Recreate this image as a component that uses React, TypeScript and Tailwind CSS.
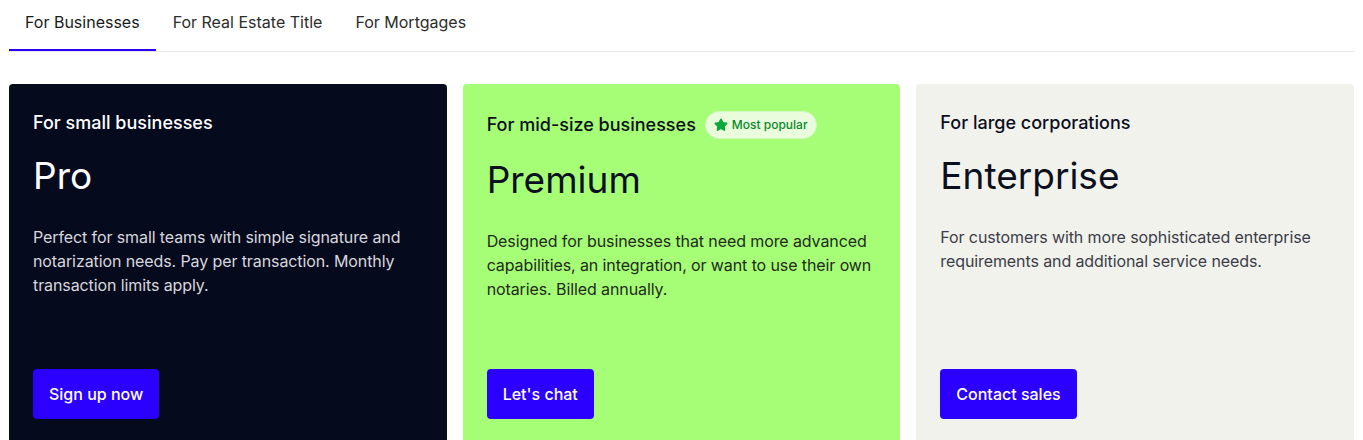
import { Star } from "lucide-react"

const tabs = ["For Businesses", "For Real Estate Title", "For Mortgages"]

type Plan = {
  audience: string
  name: string
  description: string
  cta: string
  card: string
  audienceText: string
  nameText: string
  bodyText: string
  popular?: boolean
}

const plans: Plan[] = [
  {
    audience: "For small businesses",
    name: "Pro",
    description:
      "Perfect for small teams with simple signature and notarization needs. Pay per transaction. Monthly transaction limits apply.",
    cta: "Sign up now",
    card: "bg-[#060a1d]",
    audienceText: "text-white",
    nameText: "text-white",
    bodyText: "text-[#d6d7de]",
  },
  {
    audience: "For mid-size businesses",
    name: "Premium",
    description:
      "Designed for businesses that need more advanced capabilities, an integration, or want to use their own notaries. Billed annually.",
    cta: "Let's chat",
    card: "bg-[#a6fd76]",
    audienceText: "text-[#0b0f1e]",
    nameText: "text-[#0b0f1e]",
    bodyText: "text-[#1f2a1c]",
    popular: true,
  },
  {
    audience: "For large corporations",
    name: "Enterprise",
    description: "For customers with more sophisticated enterprise requirements and additional service needs.",
    cta: "Contact sales",
    card: "bg-[#f2f2ed]",
    audienceText: "text-[#0b0f1e]",
    nameText: "text-[#0b0f1e]",
    bodyText: "text-[#3a3d47]",
  },
]

export default function App() {
  return (
    <div className="min-h-screen bg-white px-[9px] font-['Inter','Liberation_Sans',sans-serif]">
      <div className="flex gap-px border-b border-[#e8e8e4]">
        {tabs.map((tab, i) => (
          <button
            key={tab}
            className={
              i === 0
                ? "h-[51px] border-b-2 border-[#2b00ff] px-4 pb-[6px] text-[16px] text-[#1a1a1a]"
                : "h-[51px] border-b-2 border-transparent px-4 pb-[6px] text-[16px] text-[#2c2c2c]"
            }
          >
            {tab}
          </button>
        ))}
      </div>

      <div className="mt-8 grid grid-cols-3 gap-4">
        {plans.map((plan) => (
          <div key={plan.name} className={`flex h-[380px] flex-col rounded-[4px] px-6 pt-[27px] pb-[45px] ${plan.card}`}>
            <div className="flex min-h-6 items-center gap-[9px]">
              <h3 className={`text-[18px] leading-6 font-medium ${plan.audienceText}`}>{plan.audience}</h3>
              {plan.popular && (
                <span className="flex h-7 items-center gap-1 rounded-full border border-[#d4f7c0] bg-[#e9fcdc] px-2 text-[12px] font-medium text-[#0a8a2e]">
                  <Star className="h-3.5 w-3.5 fill-[#0aa83a] text-[#0aa83a]" />
                  Most popular
                </span>
              )}
            </div>
            <div className={`mt-[19px] text-[37px] leading-[44px] ${plan.nameText}`}>{plan.name}</div>
            <p className={`mt-[27px] text-[16px] leading-6 tracking-[-0.1px] ${plan.bodyText}`}>{plan.description}</p>
            <div className="mt-auto">
              <button className="h-[50px] rounded-[4px] bg-[#2b00ff] px-4 text-[16px] font-medium text-white">
                {plan.cta}
              </button>
            </div>
          </div>
        ))}
      </div>
    </div>
  )
}
